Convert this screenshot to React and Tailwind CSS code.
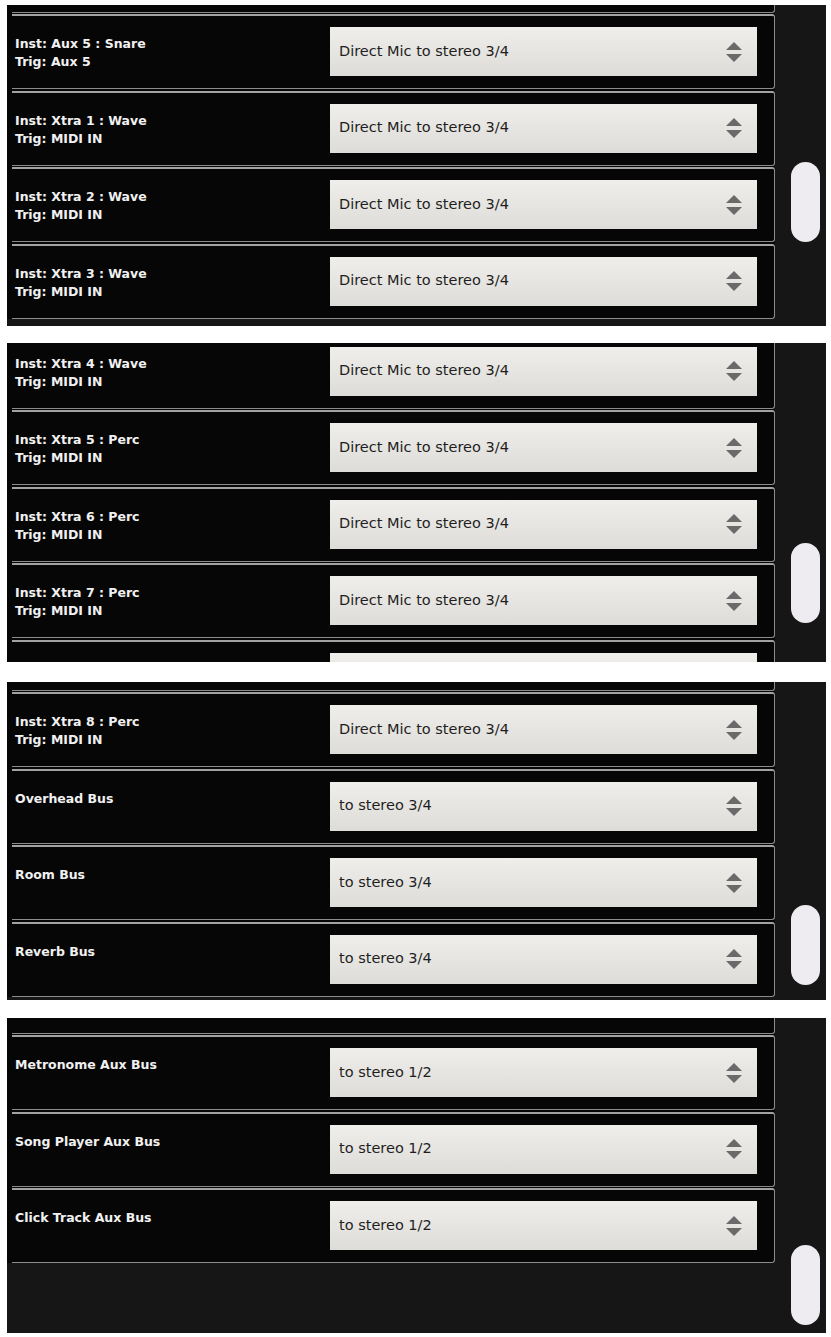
import React from 'react';

// one drum-routing screen, photographed four times while scrolling
const panels = [
  {
    height: 'h-[321px]',
    gap: 'mb-[17px]',
    stub: 'h-[7.5px]',
    listOffset: '',
    pill: 'mt-[157px]',
    rows: [
      { label: 'Inst: Aux 5 : Snare', sub: 'Trig: Aux 5', value: 'Direct Mic to stereo 3/4' },
      { label: 'Inst: Xtra 1 : Wave', sub: 'Trig: MIDI IN', value: 'Direct Mic to stereo 3/4' },
      { label: 'Inst: Xtra 2 : Wave', sub: 'Trig: MIDI IN', value: 'Direct Mic to stereo 3/4' },
      { label: 'Inst: Xtra 3 : Wave', sub: 'Trig: MIDI IN', value: 'Direct Mic to stereo 3/4' },
    ],
  },
  {
    height: 'h-[319px]',
    gap: 'mb-[20px]',
    stub: null,
    listOffset: '-mt-[9.5px]',
    pill: 'mt-[200px]',
    rows: [
      { label: 'Inst: Xtra 4 : Wave', sub: 'Trig: MIDI IN', value: 'Direct Mic to stereo 3/4' },
      { label: 'Inst: Xtra 5 : Perc', sub: 'Trig: MIDI IN', value: 'Direct Mic to stereo 3/4' },
      { label: 'Inst: Xtra 6 : Perc', sub: 'Trig: MIDI IN', value: 'Direct Mic to stereo 3/4' },
      { label: 'Inst: Xtra 7 : Perc', sub: 'Trig: MIDI IN', value: 'Direct Mic to stereo 3/4' },
      // scrolled past the bottom edge, only the top of the select peeks in
      { label: '', value: '' },
    ],
  },
  {
    height: 'h-[318px]',
    gap: 'mb-[18px]',
    stub: 'h-[8.5px]',
    listOffset: '',
    pill: 'mt-[223px]',
    rows: [
      { label: 'Inst: Xtra 8 : Perc', sub: 'Trig: MIDI IN', value: 'Direct Mic to stereo 3/4' },
      { label: 'Overhead Bus', value: 'to stereo 3/4' },
      { label: 'Room Bus', value: 'to stereo 3/4' },
      { label: 'Reverb Bus', value: 'to stereo 3/4' },
    ],
  },
  {
    height: 'h-[315px]',
    gap: '',
    stub: 'h-[15.5px]',
    listOffset: '',
    pill: 'mt-[227px]',
    rows: [
      { label: 'Metronome Aux Bus', value: 'to stereo 1/2' },
      { label: 'Song Player Aux Bus', value: 'to stereo 1/2' },
      { label: 'Click Track Aux Bus', value: 'to stereo 1/2' },
    ],
  },
];

const UpDown = () => (
  <svg width="18" height="22" viewBox="0 0 18 22" className="shrink-0">
    <path d="M1 9 L9 1 L17 9 Z" fill="#6a6a6a" />
    <path d="M1 13 L9 21 L17 13 Z" fill="#6a6a6a" />
  </svg>
);

const Row = ({ label, sub, value }) => (
  <div className="ml-[5px] flex h-[75px] w-[763px] shrink-0 items-start rounded-r-[3px] border-t-[2.5px] border-r-[1.5px] border-b-[1.5px] border-t-[#a2a2a2] border-r-[#8c8c8c] border-b-[#8c8c8c] bg-[#060606]">
    <div className="w-[318px] pl-[3px] pt-[19px] font-['DejaVu_Sans',sans-serif] text-[12.5px] leading-[18px] font-bold text-[#f1f1f1]">
      {label && <div>{label}</div>}
      {sub && <div>{sub}</div>}
    </div>
    <div className="mt-[11px] flex h-[49px] w-[427px] items-center justify-between bg-linear-to-b from-[#efeeeb] to-[#dedcd8] pl-[9px] pr-[14px]">
      <span className="font-['DejaVu_Sans',sans-serif] text-[14.5px] text-[#1e1e1e]">{value}</span>
      <UpDown />
    </div>
  </div>
);

const Panel = ({ panel }) => (
  <div className={`ml-[7px] flex w-[819px] overflow-hidden bg-[#161616] ${panel.height} ${panel.gap}`}>
    <div className="w-[768px] shrink-0">
      <div className={`flex flex-col gap-[1.5px] bg-[#060606] ${panel.listOffset}`}>
        {panel.stub && (
          <div className={`ml-[5px] w-[763px] shrink-0 rounded-br-[3px] border-r-[1.5px] border-b-[1.5px] border-[#8c8c8c] ${panel.stub}`} />
        )}
        {panel.rows.map((row, index) => (
          <Row key={index} {...row} />
        ))}
      </div>
    </div>
    <div className="flex-1">
      <div className={`ml-[16px] h-[80px] w-[29px] rounded-full bg-[#efecf1] ${panel.pill}`} />
    </div>
  </div>
);

export default function App() {
  return (
    <div className="h-[1337px] w-[831px] bg-white pt-[5px]">
      {panels.map((panel, index) => (
        <Panel key={index} panel={panel} />
      ))}
    </div>
  );
}
